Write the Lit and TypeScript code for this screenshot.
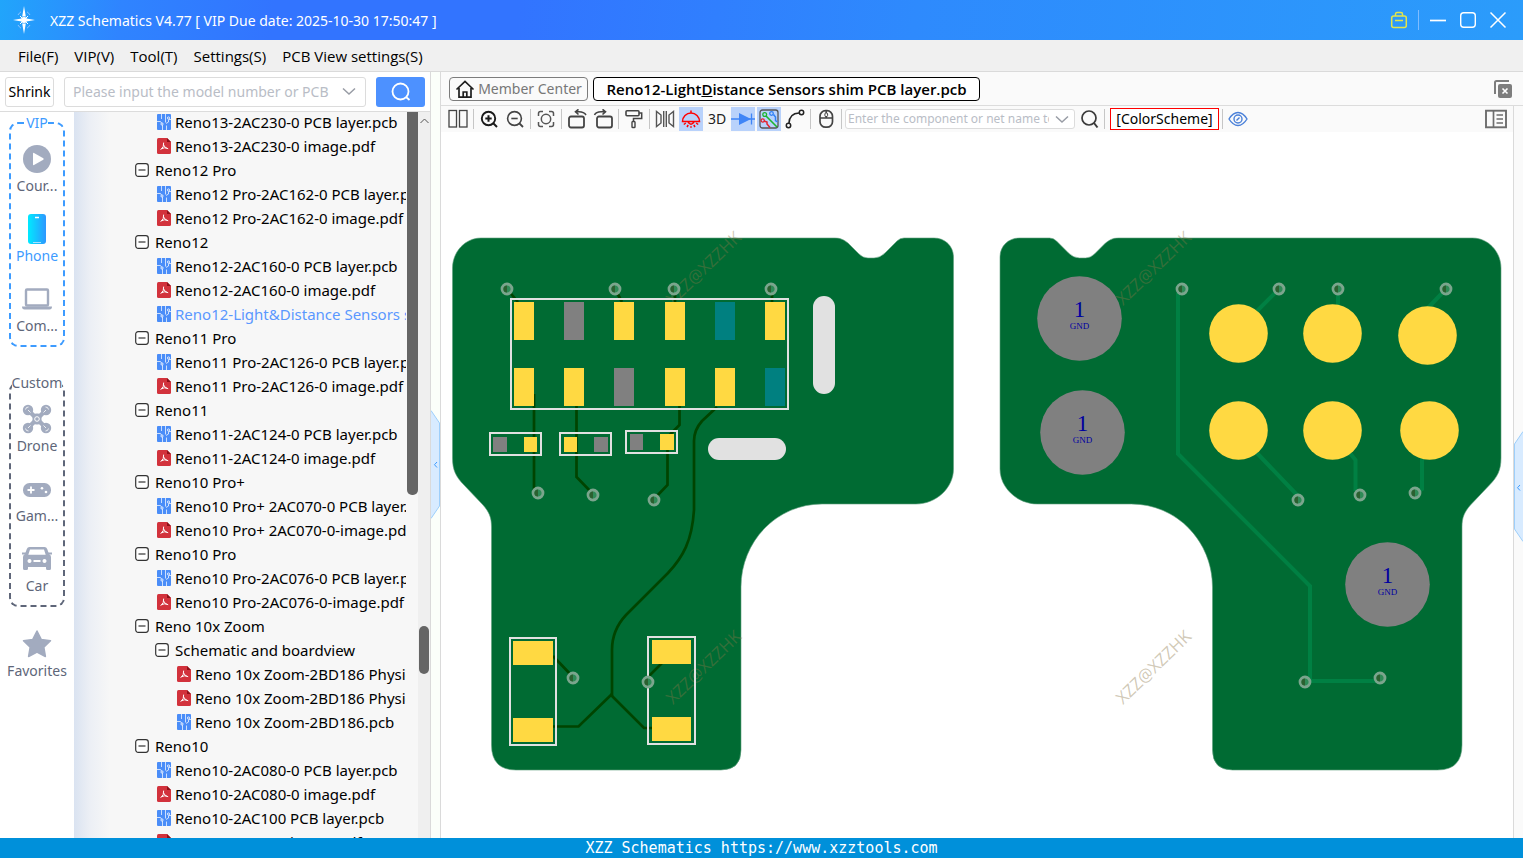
import { LitElement, html, svg, css } from "lit";
import type { TemplateResult } from "lit";
import { customElement, property } from "lit/decorators.js";
import { classMap } from "lit/directives/class-map.js";

const icon = (w: number, h: number, body: TemplateResult) =>
  html`<svg width=${w} height=${h} viewBox="0 0 ${w} ${h}" fill="none" aria-hidden="true">${body}</svg>`;

const glyph = {
  logo: icon(24, 30, svg`
    <path d="M12 1l1.8 10.6h-3.600zM12 29l1.8-10.6h-3.600zM1 15l8.6-1.500v3zM23 15l-8.6-1.500v3z" fill="#fff"/>
    <path d="M6 10a9 9 0 0 1 3-3.2M15 6.8a9 9 0 0 1 3 3.2M6 20a9 9 0 0 0 3 3.2M15 23.200a9 9 0 0 0 3-3.2" stroke="#8cc4ff" stroke-width="1"/>
    <circle cx="12" cy="15" r="3" fill="#fff"/><path d="M8 11l2 2M16 11l-2 2M8 19l2-2M16 19l-2-2" stroke="#fff"/>`),
  bag: icon(18, 18, svg`<rect x="1.700" y="5" width="14.600" height="11.500" rx="2" stroke="#e3e54a" stroke-width="1.500"/>
    <path d="M5.500 5V3.200Q5.500 1.500 7 1.500h4q1.500 0 1.500 1.700V5M5 9.500h8" stroke="#e3e54a" stroke-width="1.500"/>`),
  min: icon(18, 18, svg`<path d="M1 9.500h16" stroke="#fff" stroke-width="1.700"/>`),
  max: icon(18, 18, svg`<rect x="1.700" y="1.700" width="14.600" height="14.600" rx="3" stroke="#fff" stroke-width="1.400"/>`),
  close: icon(18, 18, svg`<path d="M1.500 1.500l15 15M16.500 1.500l-15 15" stroke="#fff" stroke-width="1.500"/>`),
  chevron: icon(14, 9, svg`<path d="M1 1.500l6 5.500 6-5.500" stroke="#989ca5" stroke-width="1.500"/>`),
  findWhite: icon(22, 22, svg`<circle cx="10.500" cy="10.500" r="8" stroke="#fff" stroke-width="1.800"/><path d="M16 16l3.500 3" stroke="#fff" stroke-width="1.800"/>`),
  find: icon(20, 20, svg`<circle cx="10" cy="9" r="7" stroke="#3a3a3a" stroke-width="1.700"/><path d="M15 14l3.500 4.500" stroke="#3a3a3a" stroke-width="2"/>`),
  home: icon(20, 20, svg`<path d="M1.500 10.500L10 2.500l8.500 8M4 9v9.200h12V9M8.200 18v-5h3.600v5" stroke="#1d1d1d" stroke-width="1.700"/>`),
  closeAll: icon(20, 20, svg`<path d="M2 15V3.500Q2 2 3.500 2H16" stroke="#7d7d7d" stroke-width="2"/><rect x="5" y="5" width="14" height="14" rx="2" fill="#7d7d7d"/><path d="M9.500 9.500l5 5M14.500 9.500l-5 5" stroke="#fff" stroke-width="1.600"/>`),
  split: icon(20, 20, svg`<rect x="1" y="1.500" width="7.500" height="16.500" stroke="#444" stroke-width="1.300"/><rect x="11.500" y="1.500" width="7.500" height="16.500" stroke="#444" stroke-width="1.300"/>`),
  zoomIn: icon(20, 20, svg`<circle cx="9.500" cy="9.500" r="6.700" stroke="#1a1a1a" stroke-width="1.900"/><path d="M14.500 14.500l3.500 3.500" stroke="#1a1a1a" stroke-width="2"/><path d="M9.500 6.300v6.400M6.300 9.500h6.400" stroke="#1a1a1a" stroke-width="2"/>`),
  zoomOut: icon(20, 20, svg`<circle cx="9.500" cy="9.500" r="6.900" stroke="#444" stroke-width="1.600"/><path d="M14.500 14.500l3.500 3.500" stroke="#444" stroke-width="1.800"/><path d="M6.300 9.500h6.400" stroke="#444" stroke-width="1.600"/>`),
  fit: icon(20, 20, svg`<path d="M2.500 7V4.500Q2.500 2.500 4.500 2.500H7M13 2.500h2.500q2 0 2 2V7M17.500 13v2.500q0 2-2 2H13M7 17.500H4.500q-2 0-2-2V13" stroke="#555" stroke-width="1.500"/><circle cx="10" cy="10" r="4.700" stroke="#555" stroke-width="1.500"/>`),
  rotL: icon(20, 20, svg`<rect x="2" y="7.500" width="15" height="11" rx="2" stroke="#444" stroke-width="1.800"/><path d="M19 6Q17 2.800 12 2.800H8.500M11.500.3L8.500 2.800l3 2.700" stroke="#444" stroke-width="1.600"/>`),
  rotR: icon(20, 20, svg`<rect x="4" y="7.500" width="15" height="11" rx="2" stroke="#444" stroke-width="1.800"/><path d="M1.500 6Q3 2.800 8 2.800h4.500M9.500.3l3 2.500-3 2.700" stroke="#444" stroke-width="1.600"/>`),
  roller: icon(20, 20, svg`<rect x="2" y="1.700" width="13" height="5" rx="1" stroke="#444" stroke-width="1.600"/><path d="M15 4h2.700v5.500H9.500v3" stroke="#444" stroke-width="1.500"/><rect x="8" y="12.500" width="3" height="6" rx=".8" stroke="#444" stroke-width="1.400"/>`),
  mirror: icon(20, 20, svg`<path d="M1.500 2.500v15l4.500-3.500V6zM18.500 2.500v15L14 14V6zM8.700 2v16M11.300 2v16" stroke="#555" stroke-width="1.400"/>`),
  lamp: icon(20, 20, svg`<path d="M1.500 12.500a8.500 8.500 0 0 1 17 0zM10 1.500V4M7 12.800q3 5 6 0M2.800 15.500l2-1.500M17.200 15.500l-2-1.500M6 18l1.200-2M14 18l-1.200-2M10 18.700v-1.500" stroke="#f00" stroke-width="1.500"/>`),
  diode: icon(24, 20, svg`<path d="M0 10h24M20.500 4.500v11" stroke="#3f85f7" stroke-width="1.300"/><path d="M8 4l12 6-12 6z" fill="#3f85f7"/>`),
  nets: icon(22, 22, svg`<rect x="2" y="2" width="18" height="18" rx="2.500" stroke="#555" stroke-width="1.300"/>
    <path d="M8 8l11 11" stroke="#1cb52c" stroke-width="1.600"/><circle cx="6.700" cy="6.500" r="1.900" stroke="#1cb52c" stroke-width="1.300"/>
    <path d="M6 13l3 1v2l3 3.500" stroke="#e5232e" stroke-width="1.500"/><circle cx="4.700" cy="12.500" r="1.600" stroke="#e5232e" stroke-width="1.300"/>
    <path d="M15.500 6.500l2 2.500v3.500l2 1.500" stroke="#2f80f5" stroke-width="1.500"/><circle cx="13.500" cy="5.500" r="1.800" stroke="#2f80f5" stroke-width="1.300"/>`),
  arc: icon(20, 20, svg`<circle cx="3.500" cy="16.500" r="2.200" stroke="#222" stroke-width="1.500"/><circle cx="16.500" cy="3.500" r="2.200" stroke="#222" stroke-width="1.500"/><path d="M4 14Q4.500 4.500 14 4" stroke="#222" stroke-width="1.600"/>`),
  mouse: icon(20, 20, svg`<rect x="4" y="1.700" width="12.500" height="16.500" rx="5.500" stroke="#444" stroke-width="1.700"/><path d="M4 9h12.500M10.200 2v2M10.200 7v2" stroke="#444" stroke-width="1.500"/><rect x="8.900" y="4" width="2.700" height="3.500" rx="1" stroke="#444"/>`),
  eye: icon(20, 16, svg`<path d="M1 8Q5 1.500 10 1.500T19 8Q15 14.500 10 14.500T1 8z" stroke="#4a80d9" stroke-width="1.400"/><circle cx="10" cy="8" r="4" stroke="#4a80d9" stroke-width="1.400"/><path d="M8.500 9.500l3-3" stroke="#4a80d9" stroke-width="1.400"/>`),
  panel: icon(22, 20, svg`<rect x="1" y="1.700" width="20" height="16.600" stroke="#6d6d6d" stroke-width="1.900"/><path d="M8.500 2v16" stroke="#6d6d6d" stroke-width="1.700"/><path d="M11.500 6h6.500M11.500 10h6.500M11.500 14h6.500" stroke="#6d6d6d" stroke-width="1.600"/>`),
  minus: icon(14, 14, svg`<rect x=".7" y=".7" width="12.600" height="12.600" rx="2.500" fill="#fff" stroke="#333" stroke-width="1.200"/><path d="M3.500 7h7" stroke="#333" stroke-width="1.200"/>`),
  pcb: icon(14, 16, svg`<rect width="14" height="16" rx="1" fill="#4a8df8"/><path d="M4.500 0v5M8.500 0v8.500M0 7.500h3.500l1 1.500M14 5.500h-2M11.500 5.500v2.500L9 9.500M5.500 11v5M9.500 11.500V16" stroke="#fff" stroke-width=".8" opacity=".9"/><circle cx="5" cy="10" r="1.100" fill="#4a8df8" stroke="#fff" stroke-width=".8"/><circle cx="11.500" cy="4" r="1.100" fill="#4a8df8" stroke="#fff" stroke-width=".8"/>`),
  pdf: icon(14, 16, svg`<path d="M1.500 0H10l4 4v10.500q0 1.500-1.500 1.500h-11Q0 16 0 14.500v-13Q0 0 1.500 0z" fill="#d2323c"/><path d="M10 0v4h4z" fill="#8d1119"/><path d="M4 11.500Q7.300 9 6.700 5M6.900 7.500Q8 10.500 10.800 10.700M5 10.500Q7.500 9.200 9.500 10" stroke="#fff" stroke-width="1" stroke-linecap="round"/>`),
  play: icon(30, 30, svg`<circle cx="15" cy="15" r="14" fill="#a2abbf"/><path d="M11 9.500q0-1 1-.5l9.300 5.300q.8.700 0 1.400L12 21q-1 .5-1-.5z" fill="#fff"/>`),
  phone: html`<svg width="30" height="30" viewBox="0 0 30 30" aria-hidden="true"><defs><linearGradient id="ph" x1="0" x2="1"><stop offset="0" stop-color="#00eaff"/><stop offset="1" stop-color="#2d97ff"/></linearGradient></defs><rect x="6" y="0" width="18" height="30" rx="3" fill="url(#ph)"/><path d="M13 3.500h4" stroke="#fff" stroke-width="1.500"/><path d="M11 28.500h8" stroke="#a8e2ff"/></svg>`,
  laptop: icon(30, 30, svg`<rect x="4" y="5.500" width="22" height="16" rx="1" stroke="#a2abbf" stroke-width="2.400"/><path d="M0 22.500h30q0 3-2.500 3h-25Q0 25.500 0 22.500z" fill="#a2abbf"/>`),
  drone: icon(30, 30, svg`<path d="M6 6l18 18M24 6L6 24" stroke="#a2abbf" stroke-width="4.400"/><circle cx="6" cy="6" r="5.200" fill="#a2abbf"/><circle cx="24" cy="6" r="5.200" fill="#a2abbf"/><circle cx="6" cy="24" r="5.200" fill="#a2abbf"/><circle cx="24" cy="24" r="5.200" fill="#a2abbf"/><path d="M3.500 5.500a3 3 0 0 1 3-2.500M26.500 5.500a3 3 0 0 0-3-2.500M3.500 24.500a3 3 0 0 0 3 2.500M26.500 24.500a3 3 0 0 1-3 2.500M6 6l2.500 2.500M24 6l-2.500 2.500M6 24l2.500-2.500M24 24l-2.500-2.500" stroke="#fff" stroke-width=".8"/><rect x="10.500" y="9.500" width="9" height="11" rx="4" fill="#a2abbf"/><circle cx="15" cy="15" r="2.300" stroke="#fff"/>`),
  game: icon(30, 30, svg`<rect x="1" y="9" width="28" height="14" rx="6.500" fill="#a2abbf"/><path d="M5.500 16h7M9 12.500v7" stroke="#fff" stroke-width="1.800"/><circle cx="20" cy="14.300" r="1.300" fill="#fff"/><circle cx="24" cy="18" r="1.300" fill="#fff"/>`),
  car: icon(30, 30, svg`<path fill-rule="evenodd" d="M7.500 3h15q2 0 2.700 2l1.800 5q2 1 2 3v11.500q0 1.500-1.500 1.500h-2q-1.500 0-1.500-1.500V23H6v1.500Q6 26 4.500 26h-2Q1 26 1 24.500V13q0-2 2-3l1.800-5q.7-2 2.700-2zM8 5.500L6.300 10.700h17.400L22 5.500zM7.500 15a2 2 0 1 0 .01 0zM22.500 15a2 2 0 1 0 .01 0zM11.500 16v2h7v-2z" fill="#a2abbf"/><path d="M0 9.500h4M26 9.500h4" stroke="#a2abbf" stroke-width="2"/>`),
  star: icon(30, 30, svg`<path d="M15 2l4.200 8.400 9.300 1.300-6.700 6.500 1.600 9.300L15 23.200l-8.400 4.300 1.600-9.300-6.700-6.500 9.300-1.300z" fill="#a2abbf" stroke="#a2abbf" stroke-width="1.500" stroke-linejoin="round"/>`),
};

const BOARD =
  "M452.500 268C452.500 252 465 238 481 238H835C841 238 844 240 848 243L859 254Q863 258 868 258H874Q880 258 885 253L897 241Q900 238 904 238H934C945 238 953.500 246 953.500 257V469C953.500 488 936 504 916 504H822C777 504 741 541 741 587V750Q741 770 721 770H516Q491.500 770 491.500 745V527C491.500 517 489 512 483 505L464 485C456 477 452.500 470 452.500 458Z";

type Box = [number, number, number, number];
const OUTLINES: Box[] = [
  [511, 299, 277, 110], [490, 433, 51, 22], [560, 433, 51, 22], [626, 431, 51, 22],
  [510, 638, 46, 107], [648, 637, 47, 107],
];
const YELLOW = "#ffd942", GREY = "#808080", TEAL = "#008080";
const COLS = [514, 564, 614, 665, 715, 765];
const ROWS: [number, string[]][] = [
  [302, [YELLOW, GREY, YELLOW, YELLOW, TEAL, YELLOW]],
  [368, [YELLOW, YELLOW, GREY, YELLOW, YELLOW, TEAL]],
];
const PADS: [string, Box][] = [
  [GREY, [493, 437, 14, 15]], [YELLOW, [524, 437, 13, 15]],
  [YELLOW, [564, 437, 13, 15]], [GREY, [594, 437, 14, 15]],
  [GREY, [630, 434, 13, 16]], [YELLOW, [660, 434, 14, 16]],
  [YELLOW, [513, 641, 40, 24]], [YELLOW, [513, 718, 40, 24]],
  [YELLOW, [652, 640, 39, 24]], [YELLOW, [652, 717, 39, 24]],
];
const VIAS = [
  [507, 289], [615, 289], [674, 289], [771, 289], [538, 493], [593, 495], [654, 500], [573, 678], [648, 682],
  [1182, 289], [1279, 289], [1338, 289], [1446, 289], [1298, 500], [1360, 495], [1415, 493], [1305, 682], [1380, 678],
];
const DISCS = [[1238.5, 333.5], [1332.5, 333.5], [1427.5, 335.5], [1238.5, 430.5], [1332.5, 430.5], [1429.5, 430.5]];
const GROUNDS = [[1079.5, 318.5], [1082.5, 432.5], [1387.5, 584.5]];
const MARKS = [[673, 306], [1123, 306], [673, 705], [1123, 705]];

@customElement("board-view")
class BoardView extends LitElement {
  static styles = css`
    :host { display: block; min-width: 0; min-height: 0; overflow: hidden; background: #fff; }
    svg { display: block; width: 100%; height: 100%; }
    .mark { font: 17px "Open Sans", "Noto Sans", sans-serif; fill: #8a7648; fill-opacity: 0.4; }
    .pin { font: 23px "Liberation Serif", serif; fill: #0000a0; text-anchor: middle; }
    .net { font: 9px "Liberation Serif", serif; fill: #0000a0; text-anchor: middle; }
  `;
  render() {
    return html`<svg viewBox="441 132 1072 706" role="img" aria-label="Board layout, both sides">
      <g fill="#006b33" stroke="#5f9f7d" stroke-width=".6">
        <path d=${BOARD} />
        <path d=${BOARD} transform="translate(1953.5 0) scale(-1 1)" />
      </g>
      <g fill="none" stroke="#004400" stroke-width="2.700">
        <path d="M507 289L518 302M615 289L622 302M675 289V302M772 289V302" />
        <path d="M534 394V490L538 493M576.500 406V477L593 494M679.500 406V425L667.500 437V485L654 499" />
        <path d="M717 407L702 421Q694 430 694 441V510C692 541 683 557 668 573L626 615Q612 630 612 650V696" />
        <path d="M612 694L578.500 726.500H553M610 694L644 728H653M553 656L573 677M663 662L648 677" />
      </g>
      <g fill="none" stroke="#008043" stroke-width="4">
        <path d="M1182 289L1178 294V454L1310 586V681H1380" />
        <path d="M1279 289L1256 312M1338 289V306M1446 289L1426 310M1256 452L1298 496M1349 452L1355.500 460V491M1422 456V489L1415 493" />
      </g>
      ${MARKS.map(([x, y]) => svg`<text class="mark" transform="translate(${x} ${y}) rotate(-44)">XZZ@XZZHK</text>`)}
      <g fill="#e1e1e1">
        <rect x="813" y="296" width="22" height="98" rx="11" />
        <rect x="708" y="438" width="78" height="22" rx="11" />
      </g>
      ${ROWS.map(([y, fills]) => fills.map((f, i) => svg`<rect x=${COLS[i]} y=${y} width="20" height="38" fill=${f}/>`))}
      ${PADS.map(([f, [x, y, w, h]]) => svg`<rect x=${x} y=${y} width=${w} height=${h} fill=${f}/>`)}
      ${OUTLINES.map(([x, y, w, h]) => svg`<rect x=${x} y=${y} width=${w} height=${h} fill="none" stroke="#e1e1e1" stroke-width="2"/>`)}
      ${VIAS.map(([x, y]) => svg`<g transform="translate(${x} ${y})"><circle r="5" fill="#2e8b57" stroke="#7ba58d" stroke-width="2.800"/><path d="M0-3.600A3.600 3.600 0 0 0 0 3.600z" fill="#2b6030"/></g>`)}
      ${DISCS.map(([x, y]) => svg`<circle cx=${x} cy=${y} r="29.300" fill="#ffd942"/>`)}
      ${GROUNDS.map(([x, y]) => svg`<circle cx=${x} cy=${y} r="42.300" fill="#808080"/>
        <text class="pin" x=${x} y=${y - 2}>1</text><text class="net" x=${x} y=${y + 10}>GND</text>`)}
    </svg>`;
  }
}

@customElement("rail-item")
class RailItem extends LitElement {
  @property() label = "";
  @property() name = "";
  @property({ type: Boolean }) active = false;
  static styles = css`
    :host { display: block; }
    svg { display: block; }
    button { display: flex; flex-direction: column; align-items: center; gap: 2px; width: 100%; padding: 0; border: 0; background: none; color: #5e6679; font: 14px/20px "Noto Sans", sans-serif; }
    .on { color: #3d9bff; }
  `;
  render() {
    return html`<button class=${classMap({ on: this.active })}>${(glyph as any)[this.name]}<span>${this.label}</span></button>`;
  }
}

type Row = { t: string; k: "group" | "pcb" | "pdf"; d?: number; on?: boolean };
const g = (t: string, d = 0): Row => ({ t, k: "group", d });
const p = (t: string, d = 1, on = false): Row => ({ t, k: "pcb", d, on });
const f = (t: string, d = 1): Row => ({ t, k: "pdf", d });
const TREE: Row[] = [
  p("Reno13-2AC230-0 PCB layer.pcb"), f("Reno13-2AC230-0 image.pdf"),
  g("Reno12 Pro"), p("Reno12 Pro-2AC162-0 PCB layer.pcb"), f("Reno12 Pro-2AC162-0 image.pdf"),
  g("Reno12"), p("Reno12-2AC160-0 PCB layer.pcb"), f("Reno12-2AC160-0 image.pdf"),
  p("Reno12-Light&Distance Sensors shim PCB layer.pcb", 1, true),
  g("Reno11 Pro"), p("Reno11 Pro-2AC126-0 PCB layer.pcb"), f("Reno11 Pro-2AC126-0 image.pdf"),
  g("Reno11"), p("Reno11-2AC124-0 PCB layer.pcb"), f("Reno11-2AC124-0 image.pdf"),
  g("Reno10 Pro+"), p("Reno10 Pro+ 2AC070-0 PCB layer.pcb"), f("Reno10 Pro+ 2AC070-0-image.pdf"),
  g("Reno10 Pro"), p("Reno10 Pro-2AC076-0 PCB layer.pcb"), f("Reno10 Pro-2AC076-0-image.pdf"),
  g("Reno 10x Zoom"), g("Schematic and boardview", 1),
  f("Reno 10x Zoom-2BD186 Physical.pdf", 2), f("Reno 10x Zoom-2BD186 Physical.pdf", 2), p("Reno 10x Zoom-2BD186.pcb", 2),
  g("Reno10"), p("Reno10-2AC080-0 PCB layer.pcb"), f("Reno10-2AC080-0 image.pdf"),
  p("Reno10-2AC100 PCB layer.pcb"), f("Reno10-2AC100 image.pdf"),
];

const sep = html`<span class="sep"></span>`;
const tool = (label: string, content: unknown, on = false) =>
  html`<button class=${classMap({ tool: true, on })} aria-label=${label} title=${label}>${content}</button>`;

@customElement("app-root")
class AppRoot extends LitElement {
  static styles = css`
    :host { display: flex; flex-direction: column; height: 100vh; overflow: hidden; color: #000; font: 14px/20px "Noto Sans", sans-serif; }
    * { box-sizing: border-box; }
    svg { display: block; flex: none; }
    button, input { font: inherit; color: inherit; margin: 0; }
    button { padding: 0; border: 0; background: none; }
    input { min-width: 0; border: 0; outline: 0; background: none; padding: 0; }
    input::placeholder { color: #b9bdc6; opacity: 1; }

    .title { flex: none; display: flex; align-items: center; height: 40px; padding: 0 16px 0 12px; color: #fff; background: linear-gradient(97deg, #21a5fb 0%, #2f84ff 8%, #3274ff 18%, #3274ff 34%, #2e8afd 60%, #2b9cfb 100%); }
    .title h1 { flex: 1; margin: 0 0 0 14px; padding-top: 1px; font-size: 14px; line-height: 20px; font-weight: 400; }
    .win { display: flex; align-items: center; gap: 12px; }
    .rule { width: 1px; height: 20px; margin: 0 -2px; background: #7fbcff; }
    .menu { flex: none; display: flex; gap: 16px; height: 32px; padding: 1px 18px 0; background: #f0f0f0; border-bottom: 1px solid #dadada; font: 15px/20px "Open Sans", sans-serif; }

    .main { flex: 1; min-height: 0; display: flex; }
    .left { flex: none; width: 431px; display: flex; flex-direction: column; border-right: 1px solid #dadada; }
    .search { flex: none; display: flex; align-items: center; height: 40px; padding: 0 5px; border-bottom: 1px solid #dcdcdc; background: #fff; }
    .shrink { width: 49px; height: 30px; border: 1px solid #dcdcdc; border-radius: 3px; white-space: nowrap; }
    .combo { display: flex; align-items: center; border: 1px solid #dcdcdc; border-radius: 3px; background: #fff; }
    .search .combo { flex: 1; height: 30px; margin: 0 10px; padding: 0 9px 0 8px; gap: 8px; }
    .combo input { flex: 1; }
    .go { display: grid; place-items: center; width: 49px; height: 30px; border-radius: 3px; background: #4d91ff; }
    .browse { flex: 1; min-height: 0; display: flex; }
    .rail { flex: none; width: 74px; padding-top: 1px; background: #fff; }
    fieldset { min-width: 0; margin: 0 9px 26px; padding: 11px 0 9px; border: 2px dashed #3d9bff; border-radius: 9px; }
    legend { margin: 0 auto; padding: 0; line-height: 20px; color: #3d9bff; }
    .items { display: grid; gap: 18px; }
    .custom { border-color: #5e6679; color: #5e6679; margin-bottom: 22px; }
    .custom legend { color: #5e6679; }
    .tree { flex: 1; min-width: 0; display: flex; overflow: hidden; background: linear-gradient(90deg, #dae3f1 0, #eceff5 16px, #f7f7f7 36px); }
    .tree ul { flex: 1; min-width: 0; overflow: hidden; margin: -2px 1px 0 0; padding: 0 0 0 61px; list-style: none; font-size: 15px; }
    li a { display: flex; align-items: center; gap: 6px; height: 24px; color: #000; text-decoration: none; white-space: nowrap; }
    .file a { gap: 4px; padding-left: 22px; }
    .d2 a { padding-left: 42px; }
    .sub a { padding-left: 20px; }
    li .on { color: #5a98ff; }
    .thumb { flex: none; width: 11px; height: 383px; border-radius: 0 0 5px 5px; background: #656565; }
    .track { flex: none; display: flex; flex-direction: column; align-items: center; width: 12px; padding-top: 6px; background: #efefef; }
    .knob { width: 10px; height: 48px; margin-top: 502px; border-radius: 5px; background: #656565; }

    .strip { flex: none; width: 9px; padding-top: 338px; background: #fbfffa; }
    .strip button, .edge button { display: block; }
    .right { flex: 1; min-width: 0; display: flex; flex-direction: column; border-left: 1px solid #dadada; }
    .tabs { flex: none; display: flex; align-items: center; gap: 5px; height: 34px; padding: 0 10px 0 8px; background: #fafafa; border-bottom: 1px solid #dcdcdc; }
    .tab { display: flex; align-items: center; justify-content: center; gap: 3px; width: 139px; height: 24px; border: 1px solid #7c7c7c; border-radius: 4px; color: #777; background: #fafafa; white-space: nowrap; }
    .current { width: 387px; border-color: #000; color: #000; background: #fff; font: 600 15px/20px "Open Sans", sans-serif; }
    .push { margin-left: auto; }
    .work { flex: 1; min-height: 0; display: flex; }
    .pane { flex: 1; min-width: 0; display: flex; flex-direction: column; }
    .tools { flex: none; display: flex; align-items: center; gap: 2px; height: 26px; padding: 0 5px; background: #fafafa; }
    .tool { flex: none; display: grid; place-items: center; width: 24px; height: 24px; color: #222; }
    .tool.on { background: #b9d2fb; }
    .sep { flex: none; width: 1px; height: 20px; margin: 0 1px; background: #c6c6c6; }
    .tools .combo { width: 230px; height: 20px; padding: 0 5px 0 2px; font-size: 12px; gap: 6px; }
    .scheme { width: 109px; height: 22px; margin-left: 2px; border: 1px solid #f00; background: #fff; white-space: nowrap; }
    board-view { flex: 1; }
    .edge { flex: none; width: 10px; padding-top: 325px; border-left: 1px solid #dadada; background: #fafafa; }
    footer { flex: none; height: 20px; background: #0090da; color: #fff; text-align: center; font: 15px/20px "DejaVu Sans Mono", monospace; }
  `;

  private row(r: Row) {
    const file = r.k !== "group";
    return html`<li class=${classMap({ file, d2: file && r.d === 2, sub: !file && r.d === 1 })}>
      <a href="#" class=${classMap({ on: !!r.on })}>${file ? (glyph as any)[r.k] : glyph.minus}<span>${r.t}</span></a>
    </li>`;
  }

  private handle(label: string) {
    return html`<button aria-label=${label}>${icon(9, 109, svg`<path d="M0 .5L8.500 13V96L0 108.500" fill="#d8ebff" stroke="#9dcffb"/><path d="M6 52l-2.500 2.700L6 57.500" stroke="#3d9bff"/>`)}</button>`;
  }

  render() {
    return html`
      <header class="title">
        ${glyph.logo}
        <h1>XZZ Schematics V4.77 [ VIP Due date: 2025-10-30 17:50:47 ]</h1>
        <div class="win">
          <button aria-label="Account">${glyph.bag}</button><span class="rule"></span>
          <button aria-label="Minimize">${glyph.min}</button>
          <button aria-label="Maximize">${glyph.max}</button>
          <button aria-label="Close">${glyph.close}</button>
        </div>
      </header>
      <nav class="menu">
        ${["File(F)", "VIP(V)", "Tool(T)", "Settings(S)", "PCB View settings(S)"].map((m) => html`<button>${m}</button>`)}
      </nav>
      <div class="main">
        <aside class="left">
          <div class="search">
            <button class="shrink">Shrink</button>
            <div class="combo">
              <input aria-label="Model number or PCB" placeholder="Please input the model number or PCB" />
              <button aria-label="Open list">${glyph.chevron}</button>
            </div>
            <button class="go" aria-label="Search">${glyph.findWhite}</button>
          </div>
          <div class="browse">
            <nav class="rail">
              <fieldset>
                <legend>VIP</legend>
                <div class="items">
                  <rail-item name="play" label="Cour..."></rail-item>
                  <rail-item name="phone" label="Phone" active></rail-item>
                  <rail-item name="laptop" label="Com..."></rail-item>
                </div>
              </fieldset>
              <fieldset class="custom">
                <legend>Custom</legend>
                <div class="items">
                  <rail-item name="drone" label="Drone"></rail-item>
                  <rail-item name="game" label="Gam..."></rail-item>
                  <rail-item name="car" label="Car"></rail-item>
                </div>
              </fieldset>
              <rail-item name="star" label="Favorites"></rail-item>
            </nav>
            <div class="tree">
              <ul>${TREE.map((r) => this.row(r))}</ul>
              <div class="thumb"></div>
              <div class="track">
                ${icon(9, 6, svg`<path d="M.5 5l4-4 4 4" stroke="#555"/>`)}
                <div class="knob"></div>
              </div>
            </div>
          </div>
        </aside>
        <div class="strip">${this.handle("Collapse left panel")}</div>
        <section class="right">
          <div class="tabs">
            <button class="tab">${glyph.home}<span>Member Center</span></button>
            <button class="tab current"><span>Reno12-Light<u>D</u>istance Sensors shim PCB layer.pcb</span></button>
            <button class="push" aria-label="Close all tabs">${glyph.closeAll}</button>
          </div>
          <div class="work">
            <div class="pane">
              <div class="tools">
                ${tool("Split view", glyph.split)}${sep}
                ${tool("Zoom in", glyph.zoomIn)}${tool("Zoom out", glyph.zoomOut)}${sep}
                ${tool("Fit", glyph.fit)}${sep}
                ${tool("Rotate left", glyph.rotL)}${tool("Rotate right", glyph.rotR)}${sep}
                ${tool("Paint", glyph.roller)}${sep}
                ${tool("Mirror", glyph.mirror)}${tool("Highlight", glyph.lamp, true)}${tool("3D view", "3D")}
                ${tool("Diode values", glyph.diode, true)}${tool("Nets", glyph.nets, true)}${tool("Trace", glyph.arc)}${sep}
                ${tool("Mouse mode", glyph.mouse)}${sep}
                <div class="combo">
                  <input aria-label="Component or net name" placeholder="Enter the component or net name to search" />
                  <button aria-label="Open list">${glyph.chevron}</button>
                </div>
                ${tool("Find", glyph.find)}${sep}
                <button class="scheme">[ColorScheme]</button>${sep}
                ${tool("Visibility", glyph.eye)}
                <button class="tool push" aria-label="Side panel">${glyph.panel}</button>
              </div>
              <board-view></board-view>
            </div>
            <div class="edge">
              <button aria-label="Expand right panel">${icon(9, 111, svg`<path d="M9 .5L.5 13V98L9 110.500" fill="#d8ebff" stroke="#9dcffb"/><path d="M6 54l-2.500 2.700L6 59.500" stroke="#3d9bff"/>`)}</button>
            </div>
          </div>
        </section>
      </div>
      <footer>XZZ Schematics https://www.xzztools.com</footer>
    `;
  }
}
